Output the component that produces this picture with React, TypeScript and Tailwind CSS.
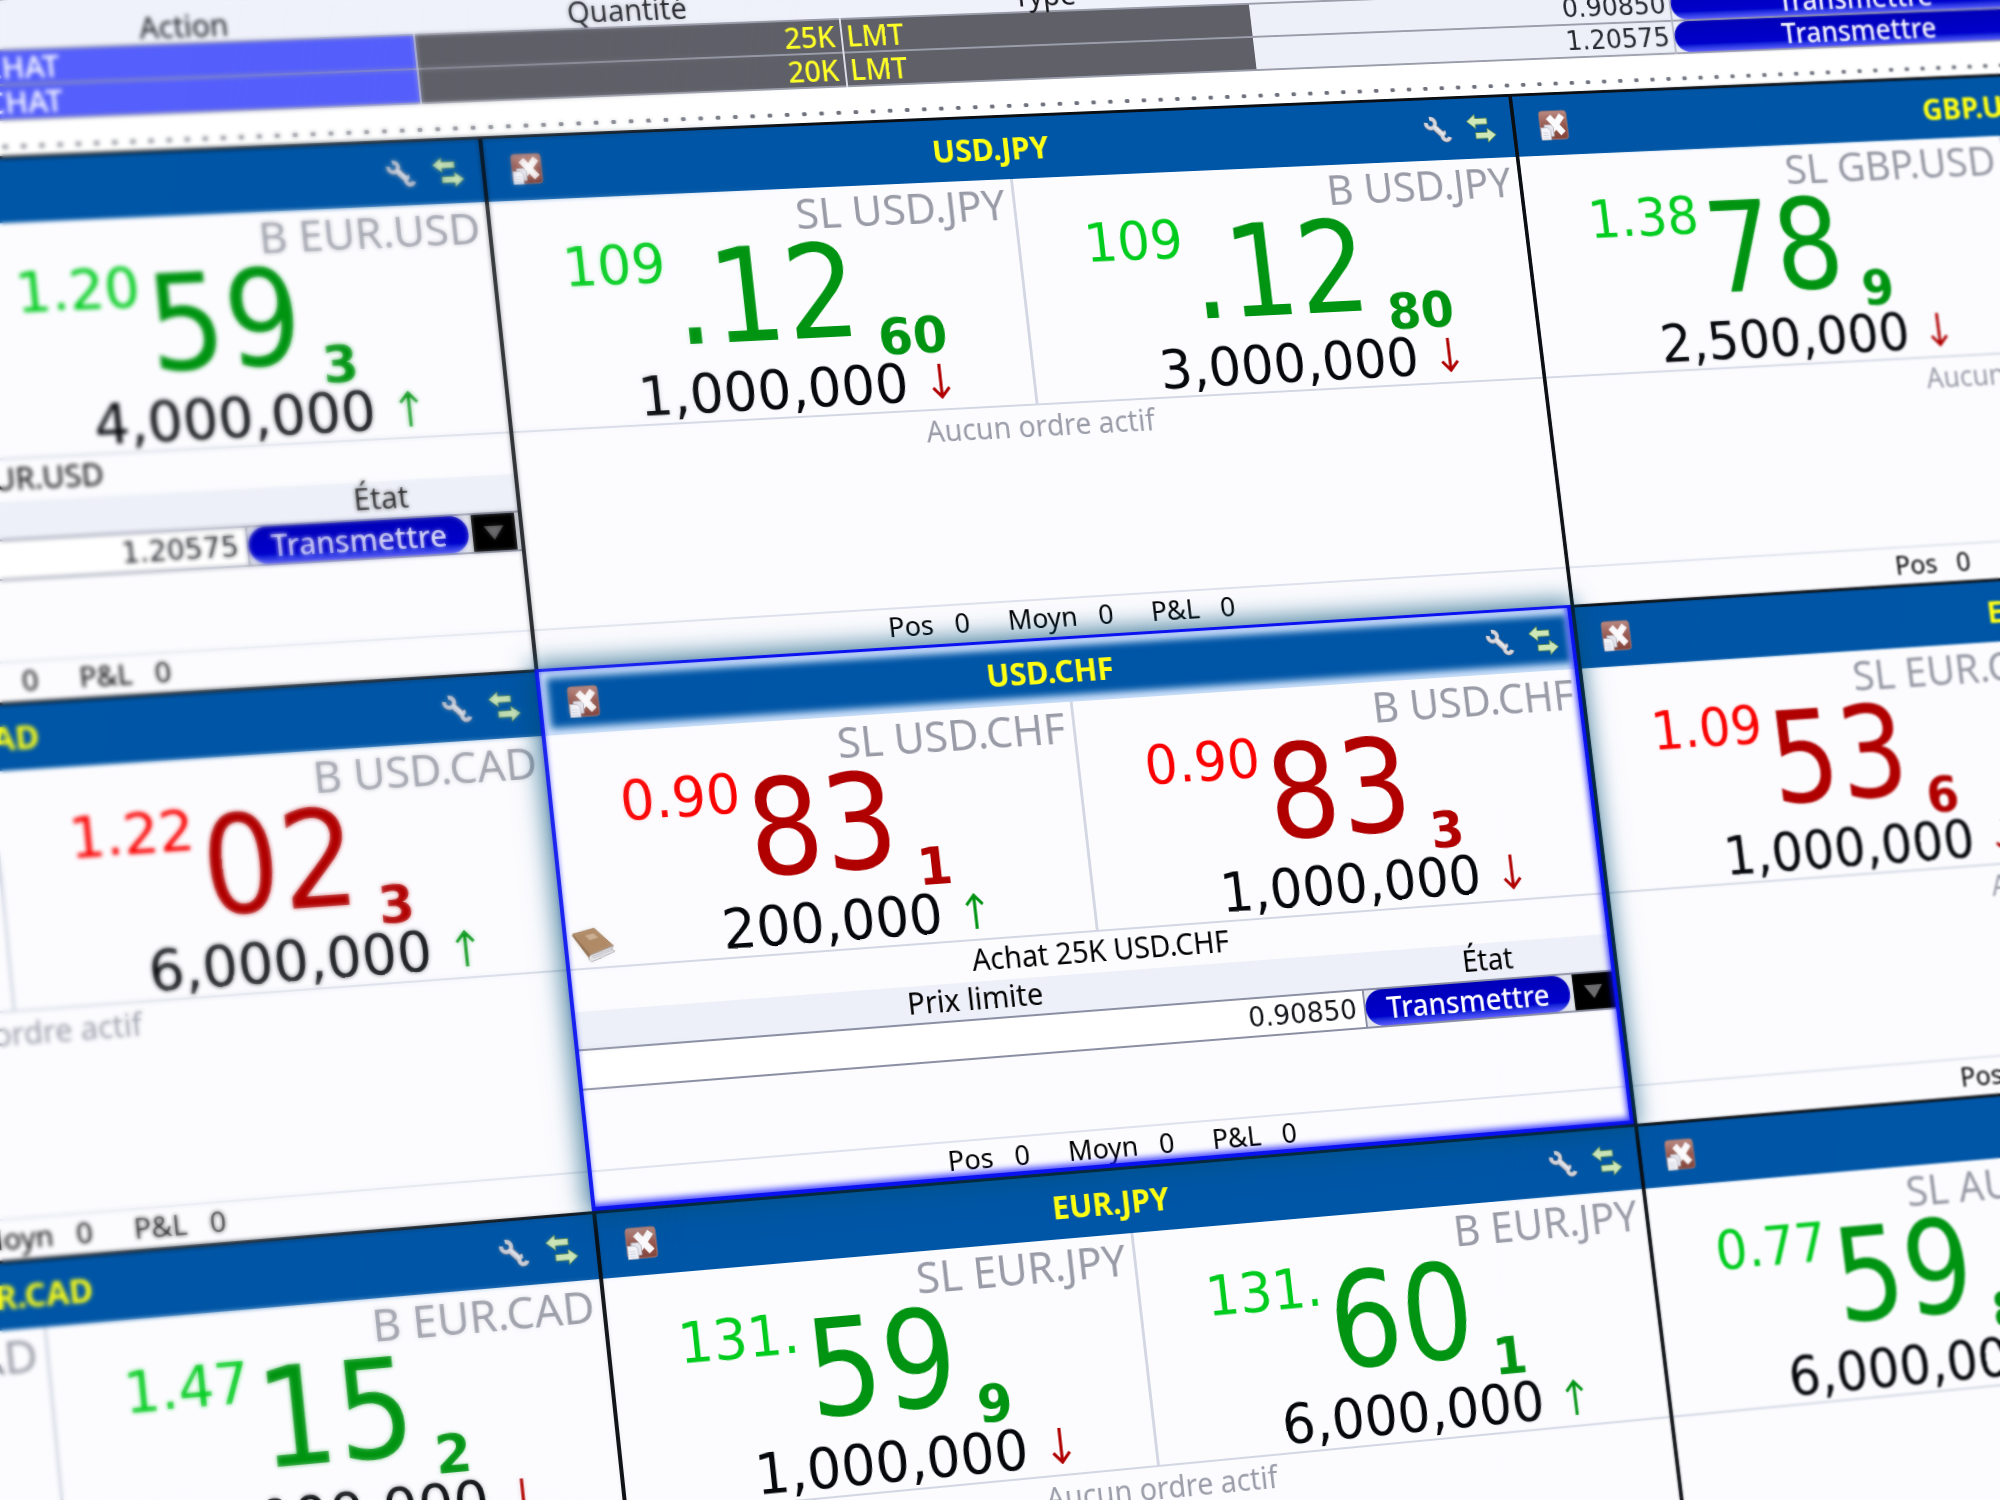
import React from "react";

type Tone = "up" | "down";

type Quote = {
  side: string;
  lead: string;
  main: string;
  tail: string;
  size: string;
  move: Tone;
};

type Order = { title: string; price: string };

type Pair = {
  symbol: string;
  tone: Tone;
  quotes: [Quote, Quote];
  order?: Order;
  selected?: boolean;
};

const pairs: Pair[] = [
  {
    symbol: "EUR.USD",
    tone: "up",
    quotes: [
      { side: "SL", lead: "1.20", main: "59", tail: "2", size: "1,000,000", move: "up" },
      { side: "B", lead: "1.20", main: "59", tail: "3", size: "4,000,000", move: "up" },
    ],
    order: { title: "Achat 20K EUR.USD", price: "1.20575" },
  },
  {
    symbol: "USD.JPY",
    tone: "up",
    quotes: [
      { side: "SL", lead: "109", main: ".12", tail: "60", size: "1,000,000", move: "down" },
      { side: "B", lead: "109", main: ".12", tail: "80", size: "3,000,000", move: "down" },
    ],
  },
  {
    symbol: "GBP.USD",
    tone: "up",
    quotes: [
      { side: "SL", lead: "1.38", main: "78", tail: "9", size: "2,500,000", move: "down" },
      { side: "B", lead: "1.38", main: "79", tail: "1", size: "1,000,000", move: "up" },
    ],
  },
  {
    symbol: "USD.CAD",
    tone: "down",
    quotes: [
      { side: "SL", lead: "1.22", main: "02", tail: "1", size: "1,000,000", move: "down" },
      { side: "B", lead: "1.22", main: "02", tail: "3", size: "6,000,000", move: "up" },
    ],
  },
  {
    symbol: "USD.CHF",
    tone: "down",
    quotes: [
      { side: "SL", lead: "0.90", main: "83", tail: "1", size: "200,000", move: "up" },
      { side: "B", lead: "0.90", main: "83", tail: "3", size: "1,000,000", move: "down" },
    ],
    order: { title: "Achat 25K USD.CHF", price: "0.90850" },
    selected: true,
  },
  {
    symbol: "EUR.CHF",
    tone: "down",
    quotes: [
      { side: "SL", lead: "1.09", main: "53", tail: "6", size: "1,000,000", move: "down" },
      { side: "B", lead: "1.09", main: "53", tail: "9", size: "1,000,000", move: "up" },
    ],
  },
  {
    symbol: "EUR.CAD",
    tone: "up",
    quotes: [
      { side: "SL", lead: "1.47", main: "14", tail: "9", size: "1,000,000", move: "down" },
      { side: "B", lead: "1.47", main: "15", tail: "2", size: "1,000,000", move: "down" },
    ],
  },
  {
    symbol: "EUR.JPY",
    tone: "up",
    quotes: [
      { side: "SL", lead: "131.", main: "59", tail: "9", size: "1,000,000", move: "down" },
      { side: "B", lead: "131.", main: "60", tail: "1", size: "6,000,000", move: "up" },
    ],
  },
  {
    symbol: "AUD.USD",
    tone: "up",
    quotes: [
      { side: "SL", lead: "0.77", main: "59", tail: "8", size: "6,000,000", move: "up" },
      { side: "B", lead: "0.77", main: "60", tail: "1", size: "1,000,000", move: "down" },
    ],
  },
];

const activity = [
  { action: "ACHAT", qty: "25K", type: "LMT", price: "0.90850" },
  { action: "ACHAT", qty: "20K", type: "LMT", price: "1.20575" },
];

function CloseIcon() {
  return (
    <svg viewBox="0 0 32 32" className="size-8" aria-hidden="true">
      <defs>
        <linearGradient id="closeFill" x1="0" y1="0" x2="0" y2="1">
          <stop offset="0" stopColor="#b98a83" />
          <stop offset="0.5" stopColor="#97594f" />
          <stop offset="1" stopColor="#84443a" />
        </linearGradient>
      </defs>
      <rect x="1" y="1" width="30" height="30" rx="3" fill="url(#closeFill)" stroke="#a8776f" />
      <path d="M11 7l15 18M26 6L13 22" stroke="#fbfafc" strokeWidth="7" />
      <path d="M5.500 15.500h7l3 3V28h-10z" fill="#e6e6ee" stroke="#a8a4b0" strokeWidth="0.800" />
      <path d="M1.500 18.500h7.500l3 3v10H1.500z" fill="#f4f5fa" stroke="#b0b0be" strokeWidth="0.800" />
      <path d="M3.500 24h6M3.500 26.500h6M3.500 29h6" stroke="#cfd2de" />
    </svg>
  );
}

const wrench = "M8 4A5 5 0 1 1 4 8M24.500 19A4 4 0 1 0 28.500 24";

function WrenchIcon() {
  return (
    <svg viewBox="0 0 32 32" className="size-8" fill="none" aria-hidden="true">
      <path d="M11.500 11.500L22 22.500" stroke="#85838c" strokeWidth="7" />
      <path d={wrench} stroke="#85838c" strokeWidth="5" />
      <path d="M11.500 11.500L22 22.500" stroke="#d3d5de" strokeWidth="5.200" />
      <path d={wrench} stroke="#d3d5de" strokeWidth="3.600" />
      <path d="M12.500 11.500L22 21.500" stroke="#eef0f6" strokeWidth="1.500" />
    </svg>
  );
}

function SwapIcon() {
  return (
    <svg viewBox="0 0 32 32" className="size-8" aria-hidden="true">
      <g fill="#cfe8b8" stroke="#4f7f4c" strokeWidth="0.900" strokeLinejoin="round">
        <path d="M0.500 8.500L10 1v4.500h13v6.500H10v4.500z" />
        <path d="M31.500 23.500l-9.500-7.500v4.500H9V27h13v4.500z" />
      </g>
    </svg>
  );
}

function BookIcon() {
  return (
    <svg viewBox="0 0 40 32" className="h-9 w-11" aria-hidden="true">
      <path d="M1 6l3-2 13 22-1 4z" fill="#8a6a4c" />
      <path d="M2 5L22 1l16 17-22 7z" fill="#b08a66" stroke="#94704f" strokeWidth="0.800" />
      <path d="M16 25l22-7-2 3 3 2-22 8c-3-1-3-4-1-6z" fill="#e9e9ee" stroke="#a5a0a0" strokeWidth="0.800" />
      <path d="M18 28l19-6.500M17.500 26.500L37 20" stroke="#bdbdc6" strokeWidth="0.800" />
      <path d="M13 7l8-1.500 4 4-8 2z" fill="#cdb296" />
    </svg>
  );
}

function MoveArrow({ move }: { move: Tone }) {
  return move === "up" ? (
    <svg viewBox="0 0 20 36" className="h-9 w-5" role="img" aria-label="hausse">
      <path d="M10 36V2M1.500 11.500L10 2l8.500 9.500" fill="none" stroke="#009412" strokeWidth="3.200" />
    </svg>
  ) : (
    <svg viewBox="0 0 20 36" className="h-9 w-5" role="img" aria-label="baisse">
      <path d="M10 0v34M1.500 24.500L10 34l8.500-9.500" fill="none" stroke="#b00000" strokeWidth="3.200" />
    </svg>
  );
}

function QuoteCell({ quote, symbol, tone, book }: { quote: Quote; symbol: string; tone: Tone; book?: boolean }) {
  const light = tone === "up" ? "text-[#00cc1e]" : "text-[#fa0000]";
  const strong = tone === "up" ? "text-[#009412]" : "text-[#b00000]";
  return (
    <div className="relative flex min-w-0 flex-col font-['DejaVu_Sans',sans-serif]">
      <div className="h-[42px] pr-2 text-right font-['Noto_Sans',sans-serif] text-[44px] leading-[50px] whitespace-nowrap text-[#999ba6]">
        {quote.side} {symbol}
      </div>
      <div className="flex h-[135px] items-start pl-[68px] whitespace-nowrap">
        <span className={"text-[55px] leading-[56px] " + light}>{quote.lead}</span>
        <span
          className={
            "mt-4 ml-1 font-['DejaVu_Sans_Condensed','DejaVu_Sans',sans-serif] text-[134px] leading-[100px] " + strong
          }
        >
          {quote.main}
        </span>
        <span className={"mt-[89px] ml-4 text-[52px] leading-[52px] font-bold " + strong}>{quote.tail}</span>
      </div>
      <div className="grid h-14 grid-cols-[1fr_auto_1fr] items-center whitespace-nowrap">
        <span className="pt-3 pl-1">{book && <BookIcon />}</span>
        <span className="text-[55px] leading-[56px] text-[#06080c]">{quote.size}</span>
        <span className="pl-6">
          <MoveArrow move={quote.move} />
        </span>
      </div>
    </div>
  );
}

function OrderPanel({ order, id }: { order: Order; id: string }) {
  return (
    <div className="flex flex-col text-[30px]">
      <p className="h-[41px] text-center leading-[37px] text-black">{order.title}</p>
      <div className="grid h-[39px] grid-cols-[3fr_1fr] border-b-2 border-[#8b8fa3] bg-[#edf0f8] text-center leading-[34px]">
        <label htmlFor={id}>Prix limite</label>
        <span>État</span>
      </div>
      <div className="grid h-[39px] grid-cols-[3fr_1fr] border-b-2 border-[#8b8fa3]">
        <input
          id={id}
          defaultValue={order.price}
          className="h-full min-w-0 border-r-2 border-[#8b8fa3] bg-white pr-2 text-right font-['DejaVu_Sans',sans-serif] text-[28px] text-[#15171c] outline-none"
        />
        <div className="flex bg-[#e4e6ee]">
          <button
            type="button"
            className="h-full flex-1 rounded-[18px] bg-linear-to-b from-[#0000b8] via-[#0000cc] via-75% to-[#5a5aff] leading-[36px] font-medium text-white"
          >
            Transmettre
          </button>
          <button type="button" aria-label="Options" className="mr-1 ml-1 flex w-11 items-center justify-center bg-black">
            <svg viewBox="0 0 20 14" className="h-3.5 w-5" aria-hidden="true">
              <path d="M0 0h20L10 14z" fill="#6d6d70" />
            </svg>
          </button>
        </div>
      </div>
    </div>
  );
}

function PairTile({ pair }: { pair: Pair }) {
  const frame = pair.selected
    ? "z-10 border-[#0a12f0] shadow-[0_0_24px_4px_rgba(0,80,120,0.75)] after:pointer-events-none after:absolute after:inset-0 after:border-r-[4px] after:border-b-[4px] after:border-[#0a12f0] after:shadow-[inset_-2px_-3px_6px_rgba(20,20,255,0.8)]"
    : "border-[#0b0e12]";
  const head = pair.selected ? "shadow-[inset_0_0_7px_7px_rgba(215,232,255,0.95)]" : "";
  return (
    <article className={"relative flex h-[540px] flex-col border-t-[3px] border-l-[4px] bg-[#fcfcff] " + frame}>
      <header className={"flex h-16 shrink-0 items-center bg-[#0056a6] pr-[18px] pl-[26px] " + head}>
        <button type="button" aria-label="Fermer">
          <CloseIcon />
        </button>
        <h2 className="flex-1 text-center text-[32px] leading-10 font-bold text-[#ffff14]">{pair.symbol}</h2>
        <div className="flex gap-4">
          <button type="button" aria-label="Configurer">
            <WrenchIcon />
          </button>
          <button type="button" aria-label="Inverser">
            <SwapIcon />
          </button>
        </div>
      </header>
      <div className="grid shrink-0 grid-cols-2 divide-x-[3px] divide-[#d3d7e3] border-b-2 border-[#d3d7e3]">
        {pair.quotes.map((q, i) => (
          <QuoteCell key={q.side} quote={q} symbol={pair.symbol} tone={pair.tone} book={pair.selected && i === 0} />
        ))}
      </div>
      <div className="flex-1">
        {pair.order ? (
          <OrderPanel order={pair.order} id={"limit-" + pair.symbol} />
        ) : (
          <p className="text-center text-[30px] leading-[41px] text-[#9a9ca8]">Aucun ordre actif</p>
        )}
      </div>
      <footer className="flex h-10 shrink-0 justify-center gap-10 border-t-2 border-[#dfe2ec] text-[28px] leading-[34px] text-black">
        {["Pos", "Moyn", "P&L"].map((label) => (
          <span key={label} className="flex gap-[22px]">
            <span>{label}</span>
            <span>0</span>
          </span>
        ))}
      </footer>
    </article>
  );
}

function ActivityTable() {
  return (
    <div className="flex h-[180px] flex-col bg-white">
      <div className="h-6 w-full bg-[#eff2fa] text-[28px] leading-7 text-[#15171c]">
        <p className="w-[664px] text-right">En cours</p>
      </div>
      <table className="w-full table-fixed border-collapse text-[30px] leading-8">
        <colgroup>
          <col className="w-[579px]" />
          <col className="w-[460px]" />
          <col className="w-[440px]" />
          <col className="w-[437px]" />
          <col className="w-[463px]" />
          <col className="w-[418px]" />
          <col />
        </colgroup>
        <thead>
          <tr className="h-[50px] bg-[#eff2fa] align-bottom text-[#15171c]">
            <th className="p-0 font-normal">Sous-jacent</th>
            <th className="p-0 font-normal">Action</th>
            <th className="p-0 font-normal">Quantité</th>
            <th className="p-0 font-normal">Type</th>
            <th className="p-0 font-normal">Prix limite</th>
            <th className="p-0 font-normal">État</th>
            <th></th>
          </tr>
        </thead>
        <tbody>
          {activity.map((row) => (
            <tr key={row.qty} className="h-[35px] border-y-2 border-[#9a9daa] bg-[#edf0f8]">
              <td></td>
              <td className="bg-[#555ffb] p-0 pl-2 font-medium text-white">{row.action}</td>
              <td className="border-x-2 border-[#dcdde6] bg-[#5f6068] p-0 pr-1.5 text-right font-medium text-[#ffff28]">
                {row.qty}
              </td>
              <td className="bg-[#5f6068] p-0 pl-1 font-medium text-[#ffff28]">{row.type}</td>
              <td className="border-r-2 border-[#b4b7c4] p-0 pr-1 text-right font-['DejaVu_Sans',sans-serif] text-[28px] text-[#22252b]">
                {row.price}
              </td>
              <td className="p-0">
                <button
                  type="button"
                  className="block h-[33px] w-full rounded-[16px] bg-linear-to-b from-[#0000b8] via-[#0000cc] via-75% to-[#5a5aff] leading-[31px] font-medium text-white"
                >
                  Transmettre
                </button>
              </td>
              <td></td>
            </tr>
          ))}
        </tbody>
      </table>
      <div className="mt-[24px] h-1 bg-[radial-gradient(circle,#6f727d_2px,transparent_3px)] bg-[size:18px_4px]" />
    </div>
  );
}

export default function App() {
  return (
    <main className="relative h-screen w-full overflow-hidden bg-[#fcfcff] font-['Noto_Sans',sans-serif]">
      <div className="w-[164vw] origin-top-left [transform:matrix3d(0.999604,-0.035149,0,0.0000385033,0.096481,0.976667,0,-0.0000152944,0,0,1,0,-632,-1,0,0.960656)]">
        <ActivityTable />
        <section className="grid grid-cols-3">
          {pairs.map((pair) => (
            <PairTile key={pair.symbol} pair={pair} />
          ))}
        </section>
      </div>
      <div className="pointer-events-none absolute inset-y-0 left-0 w-2/5 backdrop-blur-[2px] [mask-image:linear-gradient(97deg,black_20%,transparent_85%)]" />
      <div className="pointer-events-none absolute inset-y-0 right-0 w-1/4 backdrop-blur-[1px] [mask-image:linear-gradient(277deg,black_30%,transparent_90%)]" />
    </main>
  );
}
